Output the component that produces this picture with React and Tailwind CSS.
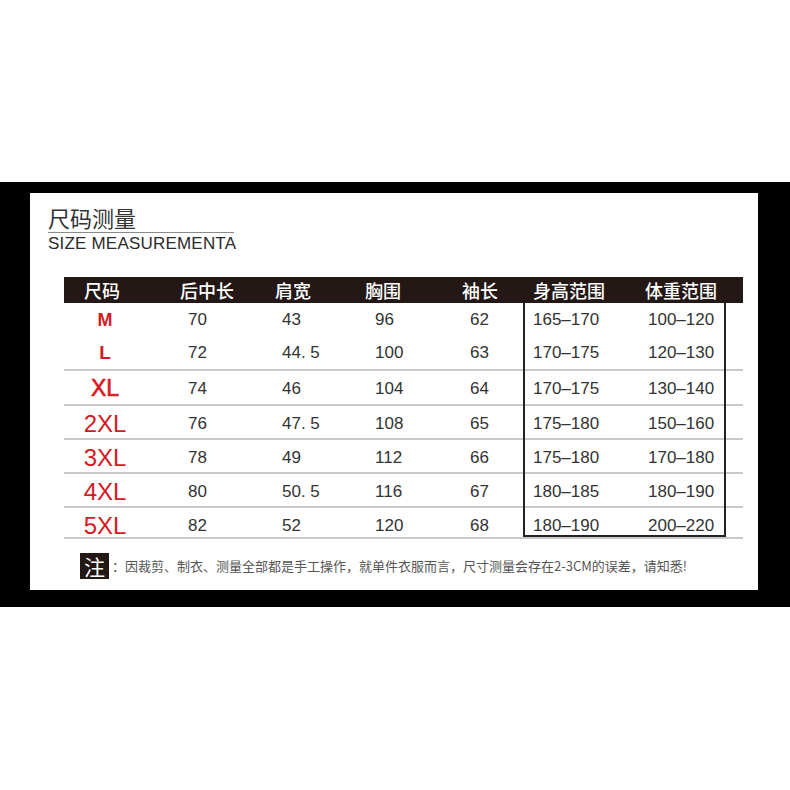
const rows = [
  { size: 'M', h: 'h-[34px]', line: false, sz: 'text-[18px] font-bold', v: ['70', '43', '96', '62', '165–170', '100–120'] },
  { size: 'L', h: 'h-[32px]', line: true, sz: 'text-[19px] font-bold', v: ['72', '44. 5', '100', '63', '170–175', '120–130'] },
  { size: 'XL', h: 'h-[33px]', line: true, sz: 'text-[23px] [-webkit-text-stroke:0.6px_#d7181f]', v: ['74', '46', '104', '64', '170–175', '130–140'] },
  { size: '2XL', h: 'h-[32px]', line: true, sz: 'text-[24px]', v: ['76', '47. 5', '108', '65', '175–180', '150–160'] },
  { size: '3XL', h: 'h-[32px]', line: true, sz: 'text-[24px]', v: ['78', '49', '112', '66', '175–180', '170–180'] },
  { size: '4XL', h: 'h-[32px]', line: true, sz: 'text-[24px]', v: ['80', '50. 5', '116', '67', '180–185', '180–190'] },
  { size: '5XL', h: 'h-[29px]', line: true, sz: 'text-[24px]', v: ['82', '52', '120', '68', '180–190', '200–220'] },
];

const grid = 'grid grid-cols-[82px_119px_90px_95px_73px_113px_90px_17px]';
const cjk = { fontFamily: '"Noto Sans CJK SC", "Noto Sans", sans-serif' };
const latin = { fontFamily: '"Liberation Sans", Arial, sans-serif' };

export default function App() {
  return (
    <div className="w-[790px] h-[790px] bg-white pt-[182px]">
      <div className="h-[425px] bg-black pt-[11px] pl-[30px] pr-[32px]">
        <div className="h-[397px] bg-white flex flex-col">
          {/* TITLE */}
          <div className="pl-[18px] pt-[11px]">
            <div className="text-[22px] leading-[26px] text-[#333] w-[186px]" style={cjk}>
              尺码测量
            </div>
            <div className="mt-[2px] w-[186px] border-t border-[#8a8a8a]" />
            <div className="mt-[1px] text-[17px] leading-[20px] tracking-[0.2px] text-[#2b2b2b]" style={latin}>
              SIZE MEASUREMENTA
            </div>
          </div>

          {/* TABLE */}
          <div className="ml-[34px] mt-[23px] w-[679px]">
            <div className={`${grid} h-[26px] bg-[#231815] text-white text-[18px] leading-[26px] font-medium`} style={cjk}>
              <div className="pl-[20px]">尺码</div>
              <div className="pl-[34px]">后中长</div>
              <div className="pl-[10px]">肩宽</div>
              <div className="pl-[10px]">胸围</div>
              <div className="pl-[12px]">袖长</div>
              <div className="pl-[10px]">身高范围</div>
              <div className="pl-[9px]">体重范围</div>
              <div />
            </div>

            <div className="relative" style={latin}>
              {rows.map((r) => (
                <div
                  key={r.size}
                  className={`${grid} ${r.h} items-center text-[17px] text-[#333] ${r.line ? 'box-content border-b-2 border-[#c9c9c9]' : ''}`}
                >
                  <div className={`text-center text-[#d7181f] ${r.sz}`}>{r.size}</div>
                  <div className="pl-[42px]">{r.v[0]}</div>
                  <div className="pl-[17px]">{r.v[1]}</div>
                  <div className="pl-[20px]">{r.v[2]}</div>
                  <div className="pl-[20px]">{r.v[3]}</div>
                  <div className="pl-[10px]">{r.v[4]}</div>
                  <div className="pl-[12px]">{r.v[5]}</div>
                  <div />
                </div>
              ))}
              {/* outlined height / weight block */}
              <div className="absolute left-[459px] top-0 bottom-[2px] w-[203px] border-x-2 border-b-2 border-[#222]" />
            </div>
          </div>

          {/* NOTE */}
          <div className="ml-[50px] mt-[14px] flex items-center">
            <div className="w-[29px] h-[26px] bg-[#231815] text-white text-[21px] leading-[26px] text-center" style={cjk}>
              注
            </div>
            <div className="ml-[3px] text-[13px] text-[#555]" style={cjk}>
              ：因裁剪、制衣、测量全部都是手工操作，就单件衣服而言，尺寸测量会存在2-3CM的误差，请知悉!
            </div>
          </div>
        </div>
      </div>
    </div>
  );
}
